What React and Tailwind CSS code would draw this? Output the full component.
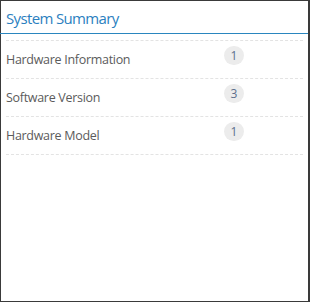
import React from 'react';

const items = [
  { label: 'Hardware Information', count: 1 },
  { label: 'Software Version', count: 3 },
  { label: 'Hardware Model', count: 1 },
];

const App = () => {
  return (
    <div
      className="w-[310px] h-[302px] bg-white border border-r-2 border-[#3a3a3a] flex flex-col"
      style={{ fontFamily: '"Open Sans", sans-serif' }}
    >
      <div className="h-[33px] border-b border-[#2a86bf] flex items-center px-[5px] -ml-px">
        <h2 className="text-[15px] tracking-[-0.65px] text-[#2b7fc0] leading-none pl-px mt-[2px]">System Summary</h2>
      </div>
      <div className="px-[5px] pt-[6px]">
        <ul className="border-t border-dashed border-[#e3e3e3]">
          {items.map((item) => (
            <li
              key={item.label}
              className="h-[38px] border-b border-dashed border-[#e3e3e3] flex items-start relative"
            >
              <span className="text-[12.5px] tracking-[-0.3px] text-[#5b5b5b] mt-[10px]">{item.label}</span>
              <span className="absolute left-[218px] top-[5px] w-[20px] h-[19px] rounded-full bg-[#ececec] text-[#5d6f8c] text-[12px] flex items-center justify-center leading-none">
                {item.count}
              </span>
            </li>
          ))}
        </ul>
      </div>
    </div>
  );
};

export default App;
